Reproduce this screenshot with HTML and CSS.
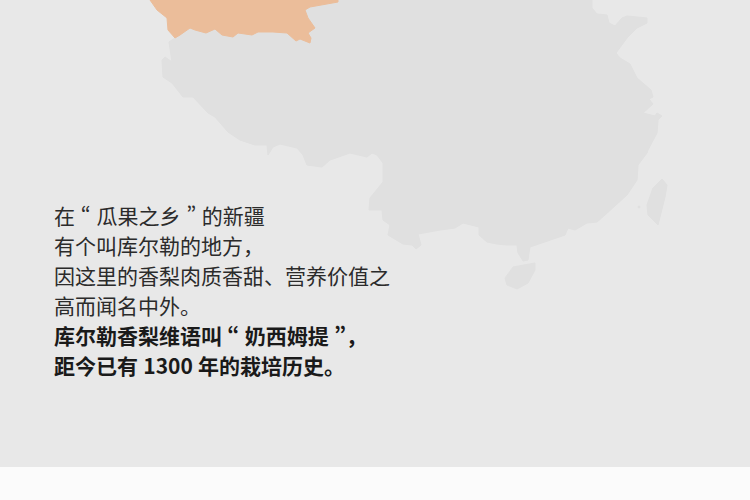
FILE: index.html
```html
<!DOCTYPE html>
<html lang="zh-CN">
<head>
<meta charset="utf-8">
<title>库尔勒香梨</title>
<link rel="stylesheet" href="styles.css">
</head>
<body>
<main class="page">
  <section class="hero">
    <svg class="map" width="750" height="467" viewBox="0 0 750 467" aria-hidden="true">
      <path class="land" d="M175 0L592 0L592 8L597 14L607 15L609 23L615 26L622 18L627 16L647 18L647 23L637 28L627 38L616 53L620 58L630 64L637 78L651 90L653 97L649 99L653 104L643 113L655 116L657 113L662 116L658 120L657 133L648 150L647 153L638 165L637 180L627 195L605 215L597 222L587 223L575 230L568 228L565 235L530 247L528 260L523 261L518 253L517 245L507 245L497 244L487 242L479 235L479 227L463 223L455 228L440 230L418 234L421 245L416 249L412 245L403 244L388 235L390 225L383 220L382 210L369 210L370 198L383 182L383 163L377 155L372 153L367 157L350 153L330 160L322 167L307 165L303 155L297 148L280 144L273 147L268 155L267 145L255 145L240 140L228 132L215 117L208 113L193 97L183 97L172 83L163 77L162 60L165 57L172 62L169 42L175 38Z"/>
      <path class="land" d="M505 278L513 267L535 263L535 270L528 283L517 289L507 285Z"/>
      <path class="land" d="M662 179L667 185L665 197L658 225L648 215L647 205L653 188Z"/>
      <circle class="land" cx="639" cy="207" r="1"/>
      <path class="region" d="M150 0L157 10L167 18L168 30L175 38L180 35L190 28L195 30L206 33L215 29L222 35L233 37L238 33L252 35L258 32L273 32L287 33L296 41L300 39L310 43L311 38L308 33L315 28L308 18L305 10L310 7L338 2L338 0Z"/>
    </svg>
    <div class="copy">
      <p class="line">在 <span class="quote">“</span> 瓜果之乡 <span class="quote">”</span> 的新疆</p>
      <p class="line">有个叫库尔勒的地方，</p>
      <p class="line">因这里的香梨肉质香甜、营养价值之</p>
      <p class="line">高而闻名中外。</p>
      <p class="line strong">库尔勒香梨维语叫 <span class="quote">“</span> 奶西姆提 <span class="quote">”</span>，</p>
      <p class="line strong">距今已有 1300 年的栽培历史。</p>
    </div>
  </section>
  <footer class="foot"></footer>
</main>
</body>
</html>
```
FILE: styles.css
```css
html, body {
  margin: 0;
  padding: 0;
}
body {
  background: #fbfbfb;
  font-family: "Noto Sans CJK SC", "Noto Sans", sans-serif;
}
.page {
  display: flex;
  flex-direction: column;
  height: 500px;
  overflow: hidden;
}
.hero {
  position: relative;
  height: 467px;
  flex: none;
  background: #e8e8e8;
  overflow: hidden;
  box-sizing: border-box;
  padding: 200px 0 0 54px;
}
.map {
  position: absolute;
  left: 0;
  top: 0;
}
.land {
  fill: #e0e0e0;
  stroke: #e0e0e0;
  stroke-width: 1;
  stroke-linejoin: round;
}
.region {
  fill: #ebbd9a;
  stroke: #ebbd9a;
  stroke-width: 1;
  stroke-linejoin: round;
}
.copy {
  position: relative;
}
.line {
  margin: 0;
  font-size: 21px;
  line-height: 30px;
  color: #2b2b2b;
  white-space: nowrap;
  word-spacing: 1px;
}
.quote {
  font-feature-settings: "pwid";
}
.strong {
  font-weight: 700;
  color: #1a1a1a;
  word-spacing: 0.5px;
}
.foot {
  flex: 1;
  background: #fbfbfb;
}
```
